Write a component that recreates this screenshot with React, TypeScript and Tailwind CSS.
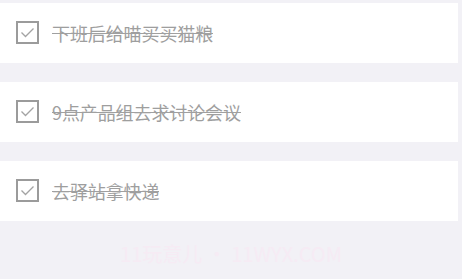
import React from 'react';

const todos = ['下班后给喵买买猫粮', '9点产品组去求讨论会议', '去驿站拿快递'];

function CheckBox() {
  return (
    <svg width="23" height="23" viewBox="0 0 23 23" className="shrink-0">
      <rect x="1" y="1" width="21" height="21" fill="none" stroke="#9b9b9b" strokeWidth="2" />
      <path d="M5.5 11.5 L9.5 15.5 L17.5 7.5" fill="none" stroke="#a3a3a3" strokeWidth="1.3" />
    </svg>
  );
}

export default function App() {
  return (
    <div
      className="w-[462px] h-[279px] bg-[#f2f1f6] pt-[3px] flex flex-col gap-[19.5px] overflow-hidden relative"
      style={{ fontFamily: '"Noto Sans CJK SC", "Noto Sans", sans-serif' }}
    >
      {todos.map((t) => (
        <div key={t} className="w-[458px] h-[59.5px] bg-white flex items-center pl-[16px] gap-[13px]">
          <CheckBox />
          <span className="relative text-[18px] leading-none text-[#9e9e9e] tracking-[-0.1px] after:absolute after:left-0 after:right-0 after:top-[9px] after:h-[1.5px] after:bg-[#a0a0a0] after:content-['']">
            {t}
          </span>
        </div>
      ))}
      <div className="absolute left-0 right-0 top-[244px] text-center text-[20px] leading-none text-[#f6ebf4]">
        11玩意儿 • 11WYX.COM
      </div>
    </div>
  );
}
